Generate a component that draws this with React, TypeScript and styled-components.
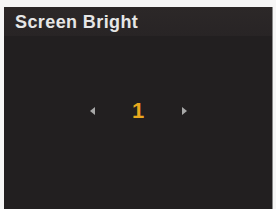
import styled, { createGlobalStyle } from "styled-components";

const GlobalStyle = createGlobalStyle`
  html, body {
    margin: 0;
    padding: 0;
    background: #f4f4f4;
  }
`;

const Frame = styled.div`
  width: 276px;
  height: 209px;
  box-sizing: border-box;
  padding: 7px 3px 0 4px;
  background: #f6f6f6;
`;

const Panel = styled.div`
  height: 202px;
  display: flex;
  flex-direction: column;
  background: #221f20;
  border-right: 1px solid #8a8a8a;
  box-sizing: border-box;
`;

const Header = styled.div`
  height: 29px;
  display: flex;
  align-items: center;
  padding: 1px 0 0 11px;
  box-sizing: border-box;
  background: linear-gradient(#2c2828, #282425);
  color: #e6e6e6;
  font-family: "Liberation Sans", Arial, sans-serif;
  font-weight: 700;
  font-size: 18px;
  letter-spacing: 0.4px;
`;

const Body = styled.div`
  flex: 1;
  display: flex;
  flex-direction: column;
  align-items: center;
  padding-top: 64px;
`;

const Selector = styled.div`
  display: flex;
  align-items: center;
`;

const Arrow = styled.span<{ $dir: "left" | "right" }>`
  width: 0;
  height: 0;
  border-top: 4px solid transparent;
  border-bottom: 4px solid transparent;
  ${(p) =>
    p.$dir === "left"
      ? "border-right: 5px solid #a8a8a8;"
      : "border-left: 5px solid #a8a8a8;"}
`;

const Value = styled.span`
  width: 87px;
  text-align: center;
  color: #e9a81e;
  font-family: "Liberation Sans", Arial, sans-serif;
  font-weight: 700;
  font-size: 22px;
  line-height: 22px;
`;

export default function App() {
  return (
    <>
      <GlobalStyle />
      <Frame>
        <Panel>
          <Header>Screen Bright</Header>
          <Body>
            <Selector>
              <Arrow $dir="left" />
              <Value>1</Value>
              <Arrow $dir="right" />
            </Selector>
          </Body>
        </Panel>
      </Frame>
    </>
  );
}
